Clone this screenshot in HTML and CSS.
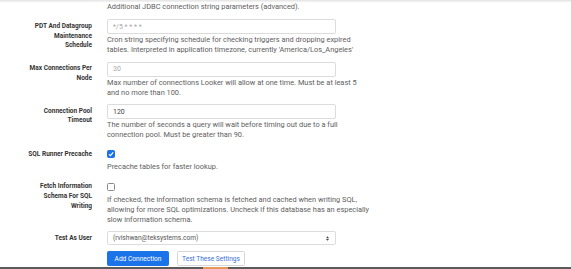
FILE: index.html
```html
<!DOCTYPE html>
<html>
<head>
<meta charset="utf-8">
<link rel="stylesheet" href="styles.css">
</head>
<body>
<div class="page">
  <div class="topshade"></div>
  <form class="form">
    <div class="row intro">
      <div class="label empty"></div>
      <div class="field">
        <div class="help first">Additional JDBC connection string parameters (advanced).</div>
      </div>
    </div>

    <div class="row">
      <div class="label">PDT And Datagroup<br>Maintenance<br>Schedule</div>
      <div class="field">
        <input class="input" type="text" placeholder="*/5 * * * *">
        <div class="help">Cron string specifying schedule for checking triggers and dropping expired<br>tables. Interpreted in application timezone, currently 'America/Los_Angeles'</div>
      </div>
    </div>

    <div class="row">
      <div class="label">Max Connections Per<br>Node</div>
      <div class="field">
        <input class="input" type="text" placeholder="30">
        <div class="help">Max number of connections Looker will allow at one time. Must be at least 5<br>and no more than 100.</div>
      </div>
    </div>

    <div class="row">
      <div class="label">Connection Pool<br>Timeout</div>
      <div class="field">
        <input class="input" type="text" value="120">
        <div class="help">The number of seconds a query will wait before timing out due to a full<br>connection pool. Must be greater than 90.</div>
      </div>
    </div>

    <div class="row">
      <div class="label cb-label">SQL Runner Precache</div>
      <div class="field">
        <div class="cbrow"><span class="cb checked"><svg viewBox="0 0 8 8" width="8" height="8"><path d="M2 4.3 L3.4 5.7 L6.2 2.4" fill="none" stroke="#fff" stroke-width="1.2"/></svg></span></div>
        <div class="help">Precache tables for faster lookup.</div>
      </div>
    </div>

    <div class="row">
      <div class="label cb-label">Fetch Information<br>Schema For SQL<br>Writing</div>
      <div class="field">
        <div class="cbrow"><span class="cb"></span></div>
        <div class="help">If checked, the information schema is fetched and cached when writing SQL,<br>allowing for more SQL optimizations. Uncheck if this database has an especially<br>slow information schema.</div>
      </div>
    </div>

    <div class="row">
      <div class="label sel-label">Test As User</div>
      <div class="field">
        <div class="select"><span>(rvishwan@teksystems.com)</span><svg class="arrows" viewBox="0 0 4 6" width="3" height="5"><path d="M0 2.5 L2 0 L4 2.5Z M0 3.5 L2 6 L4 3.5Z" fill="#444"/></svg></div>
      </div>
    </div>

    <div class="row">
      <div class="label empty"></div>
      <div class="field buttons">
        <button type="button" class="btn primary">Add Connection</button>
        <button type="button" class="btn secondary">Test These Settings</button>
      </div>
    </div>
  </form>
  <div class="taskbar"><span class="tb-accent"></span></div>
</div>
</body>
</html>
```

FILE: styles.css
```css
html, body {
  margin: 0;
  padding: 0;
  background: #fff;
}
body {
  font-family: Roboto, "Liberation Sans", Arial, sans-serif;
  width: 571px;
  height: 269px;
  overflow: hidden;
}
.page {
  position: relative;
  width: 571px;
  height: 269px;
  display: flex;
  flex-direction: column;
}
.topshade {
  height: 2px;
  background: linear-gradient(#e4e4e4, #f4f4f4);
  flex: none;
}
.form {
  flex: 1;
  display: flex;
  flex-direction: column;
  gap: 6px;
  padding-top: 1px;
}
.row {
  display: grid;
  grid-template-columns: 92px 229px;
  column-gap: 15px;
}
.row.intro {
  margin-bottom: 1px;
}
.label {
  text-align: right;
  font-weight: 700;
  font-size: 6.5px;
  line-height: 9.8px;
  color: #333;
  padding-top: 2.6px;
}
.label.empty {
  padding-top: 0;
}
.cb-label {
  padding-top: 3.4px;
}
.sel-label {
  padding-top: 2.4px;
}
.field {
  display: flex;
  flex-direction: column;
}
.help {
  font-size: 7.4px;
  line-height: 10.2px;
  color: #606060;
  margin-top: 1px;
  white-space: nowrap;
}
.help.first {
  margin-top: -1px;
}
.input {
  box-sizing: border-box;
  width: 229px;
  height: 15px;
  margin: 0;
  border: 1px solid #dcdcdc;
  border-radius: 2px;
  padding: 0 5px;
  font-family: inherit;
  font-size: 7px;
  color: #444;
  outline: none;
}
.input::placeholder {
  color: #a8a8a8;
}
.cbrow {
  height: 15px;
  display: flex;
  align-items: center;
}
.cb {
  box-sizing: border-box;
  width: 8px;
  height: 8px;
  margin-top: 1px;
  border: 1px solid #8a8a8a;
  border-radius: 1.5px;
  display: flex;
  align-items: center;
  justify-content: center;
  background: #fff;
}
.cb.checked {
  background: #1a73e8;
  border-color: #1a73e8;
}
.cb svg {
  display: block;
  flex: none;
}
.select {
  box-sizing: border-box;
  width: 229px;
  height: 14px;
  border: 1px solid #dcdcdc;
  border-radius: 2px;
  padding: 0 5px;
  display: flex;
  align-items: center;
  justify-content: space-between;
  font-size: 6.6px;
  color: #555;
}
.arrows {
  margin-right: 1px;
}
.buttons {
  flex-direction: row;
  gap: 8px;
}
.btn {
  box-sizing: border-box;
  height: 15px;
  margin: 0;
  padding: 0;
  font-family: inherit;
  font-size: 6.6px;
  white-space: nowrap;
  border-radius: 1.5px;
  cursor: pointer;
}
.btn.primary {
  width: 62px;
  background: #1a73e8;
  border: 1px solid #1a73e8;
  color: #fff;
}
.btn.secondary {
  width: 68px;
  background: #fff;
  border: 1px solid #d6d6d6;
  color: #3a6fd8;
}
.taskbar {
  position: absolute;
  left: 0;
  right: 0;
  bottom: 0;
  height: 2px;
  background: #5a5a5a;
}
.tb-accent {
  position: absolute;
  left: 203px;
  width: 25px;
  top: 0;
  bottom: 0;
  background: #e39a5c;
}
```
